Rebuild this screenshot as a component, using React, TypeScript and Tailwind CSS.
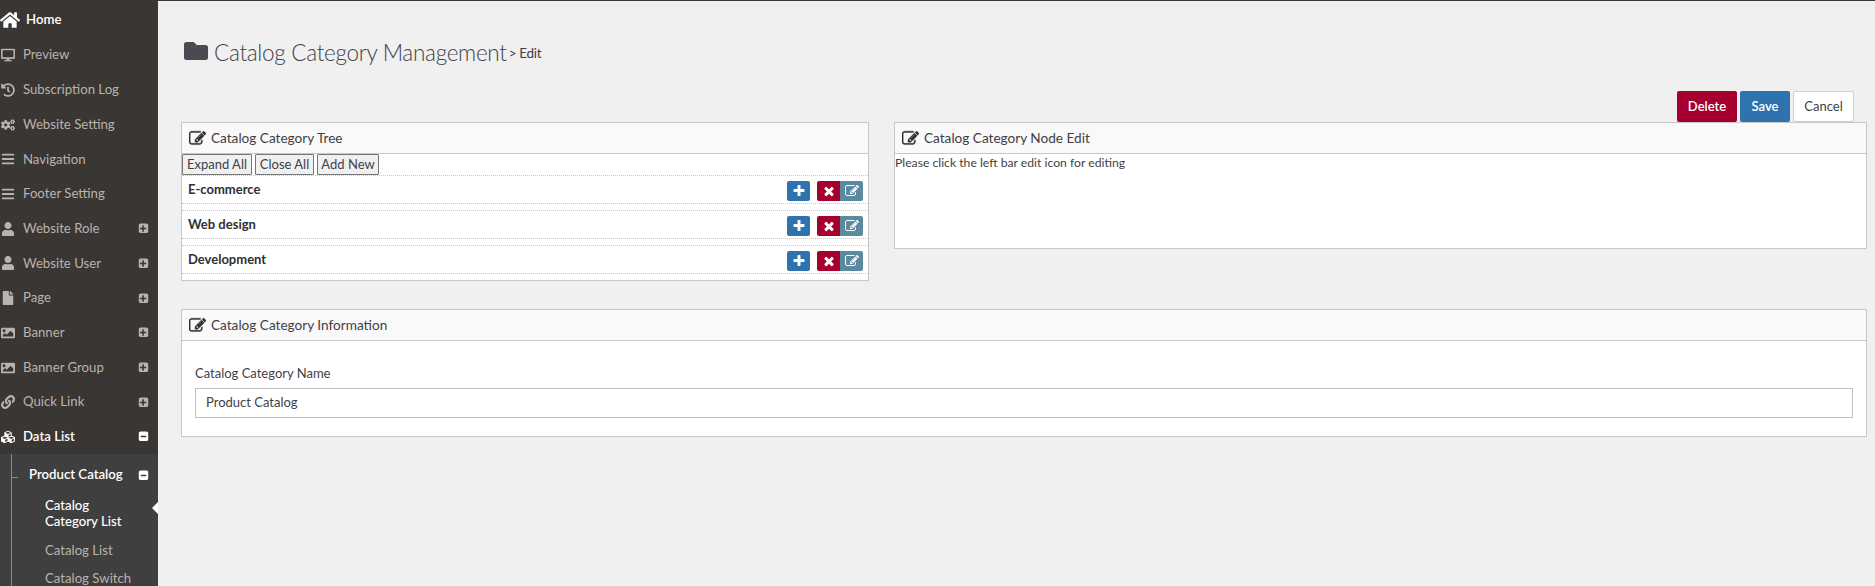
import { FaHome, FaDesktop, FaHistory, FaCogs, FaBars, FaUser, FaFile, FaImage, FaLink, FaCubes, FaFolder } from "react-icons/fa";

type IconProps = { className?: string };

function Glyph({ d, className }: IconProps & { d: string }) {
  return (
    <svg viewBox="0 0 1792 1792" fill="currentColor" className={className}>
      <path d={d} />
    </svg>
  );
}

const EditIcon = ({ className }: IconProps) => (
  <Glyph className={className} d="M888 1184l116-116-152-152-116 116v56h96v96h56zm440-720q-16-16-33 1l-350 350q-17 17-1 33t33-1l350-350q17-17 1-33zm80 594v190q0 119-84.500 203.500t-203.500 84.500h-832q-119 0-203.500-84.500t-84.500-203.500v-832q0-119 84.500-203.500t203.500-84.500h832q63 0 117 25 15 7 18 23 3 17-9 29l-49 49q-14 14-32 8-23-6-45-6h-832q-66 0-113 47t-47 113v832q0 66 47 113t113 47h832q66 0 113-47t47-113v-126q0-13 9-22l64-64q15-15 35-7t20 29zm-96-738l288 288-672 672h-288v-288zm444 132l-92 92-288-288 92-92q28-28 68-28t68 28l152 152q28 28 28 68t-28 68z" />
);
const TimesIcon = ({ className }: IconProps) => (
  <Glyph className={className} d="M1490 1322q0 40-28 68l-136 136q-28 28-68 28t-68-28l-294-294-294 294q-28 28-68 28t-68-28l-136-136q-28-28-28-68t28-68l294-294-294-294q-28-28-28-68t28-68l136-136q28-28 68-28t68 28l294 294 294-294q28-28 68-28t68 28l136 136q28 28 28 68t-28 68l-294 294 294 294q28 28 28 68z" />
);
const PlusIcon = ({ className }: IconProps) => (
  <Glyph className={className} d="M1600 736v192q0 40-28 68t-68 28h-416v416q0 40-28 68t-68 28h-192q-40 0-68-28t-28-68v-416h-416q-40 0-68-28t-28-68v-192q0-40 28-68t68-28h416v-416q0-40 28-68t68-28h192q40 0 68 28t28 68v416h416q40 0 68 28t28 68z" />
);
const PlusSquare = ({ className }: IconProps) => (
  <Glyph className={className} d="M1344 960v-128q0-26-19-45t-45-19h-320v-320q0-26-19-45t-45-19h-128q-26 0-45 19t-19 45v320h-320q-26 0-45 19t-19 45v128q0 26 19 45t45 19h320v320q0 26 19 45t45 19h128q26 0 45-19t19-45v-320h320q26 0 45-19t19-45zm320-576v960q0 119-84.500 203.500t-203.500 84.500h-960q-119 0-203.500-84.500t-84.500-203.500v-960q0-119 84.500-203.500t203.500-84.500h960q119 0 203.500 84.500t84.500 203.500z" />
);
const MinusSquare = ({ className }: IconProps) => (
  <Glyph className={className} d="M1344 960v-128q0-26-19-45t-45-19h-768q-26 0-45 19t-19 45v128q0 26 19 45t45 19h768q26 0 45-19t19-45zm320-576v960q0 119-84.500 203.500t-203.500 84.500h-960q-119 0-203.500-84.500t-84.500-203.500v-960q0-119 84.500-203.500t203.500-84.500h960q119 0 203.500 84.500t84.500 203.500z" />
);

const menu = [
  { name: "Preview", icon: FaDesktop },
  { name: "Subscription Log", icon: FaHistory },
  { name: "Website Setting", icon: FaCogs },
  { name: "Navigation", icon: FaBars },
  { name: "Footer Setting", icon: FaBars },
  { name: "Website Role", icon: FaUser, more: true },
  { name: "Website User", icon: FaUser, more: true },
  { name: "Page", icon: FaFile, more: true },
  { name: "Banner", icon: FaImage, more: true },
  { name: "Banner Group", icon: FaImage, more: true },
  { name: "Quick Link", icon: FaLink, more: true },
];

const categories = ["E-commerce", "Web design", "Development"];

function PanelHeader({ title }: { title: string }) {
  return (
    <div className="h-[31px] flex items-center gap-[5px] pl-[7px] bg-[#f9f9f9] border-b border-[#c8c8c8] text-[13.6px] text-[#3f3f46]">
      <EditIcon className="w-[17px] h-[17px] text-[#2c2c33] stroke-current stroke-[40]" />
      <span>{title}</span>
    </div>
  );
}

function Sidebar() {
  return (
    <aside className="w-[158px] h-full shrink-0 bg-[#3a3634] text-[#b9b3ae] text-[13.2px] pt-[2px] overflow-hidden">
      <div className="h-[35px] pb-px flex items-center gap-[6px] text-white font-semibold">
        <FaHome className="w-[20px] h-[18px]" />
        <span>Home</span>
      </div>
      {menu.map((item) => (
        <div key={item.name} className="h-[34.7px] flex items-center">
          <item.icon className="w-[14px] h-[14px] ml-px mr-[8px] shrink-0" />
          <span className="flex-1">{item.name}</span>
          {item.more && <PlusSquare className="w-[11px] h-[11px] mr-[9px]" />}
        </div>
      ))}
      <div className="h-[34px] flex items-center text-white font-semibold">
        <FaCubes className="w-[14px] h-[14px] ml-px mr-[8px] shrink-0" />
        <span className="flex-1">Data List</span>
        <MinusSquare className="w-[11px] h-[11px] mr-[9px] text-white" />
      </div>
      <div className="relative h-[140px] bg-[#403f3f]">
        <div className="absolute left-[11px] top-0 bottom-0 border-l border-[#8a8a8a]" />
        <div className="h-[43px] flex items-center pl-[29px] text-white font-semibold">
          <div className="absolute left-[11px] top-[23px] w-[7px] border-t border-[#8a8a8a]" />
          <span className="flex-1">Product Catalog</span>
          <MinusSquare className="w-[11px] h-[11px] mr-[9px] text-white" />
        </div>
        <div className="relative pl-[45px] pr-[24px] text-white leading-[16px] font-medium">
          Catalog Category List
          <div className="absolute right-0 top-[5px] border-y-[6px] border-r-[6px] border-y-transparent border-r-white" />
        </div>
        <div className="pl-[45px] pt-[13px] leading-[16px]">Catalog List</div>
        <div className="pl-[45px] pt-[12px] leading-[16px]">Catalog Switch</div>
      </div>
    </aside>
  );
}

export default function App() {
  return (
    <div className="h-[586px] overflow-hidden flex bg-[#f0f0f0] border-t border-[#3a3634] font-['Lato',sans-serif]">
      <Sidebar />
      <main className="flex-1 pl-[23px] pr-[8px] text-[#3f3f46]">
        {/* Title */}
        <div className="h-[90px] pt-[35px] pl-[3px] flex items-start">
          <FaFolder className="w-[24px] h-[24px] mt-[3px] text-[#4a4a52] mr-[6px]" />
          <span className="text-[22.5px] leading-[34px] font-light tracking-[-0.3px]">Catalog Category Management</span>
          <span className="text-[13.5px] leading-[34px] ml-[2px] tracking-[-0.3px]">&gt; Edit</span>
        </div>

        {/* Actions */}
        <div className="flex justify-end gap-[3px] pr-[13px] text-[13px] h-[31px]">
          <button className="w-[60px] rounded-[2px] bg-[#a6002e] text-white font-semibold">Delete</button>
          <button className="w-[50px] rounded-[2px] bg-[#2e72ae] text-white font-semibold">Save</button>
          <button className="w-[61px] rounded-[2px] bg-white border border-[#d0d0d0]">Cancel</button>
        </div>

        <div className="flex items-start gap-[25px]">
          {/* Tree */}
          <section className="w-[688px] h-[159px] bg-white border border-[#c8c8c8]">
            <PanelHeader title="Catalog Category Tree" />
            <div className="flex gap-[3px] text-[13px] h-[21px]">
              <button className="w-[70px] bg-[#f0f0f0] border border-[#767676] rounded-[1px]">Expand All</button>
              <button className="w-[59px] bg-[#f0f0f0] border border-[#767676] rounded-[1px]">Close All</button>
              <button className="w-[62px] bg-[#f0f0f0] border border-[#767676] rounded-[1px]">Add New</button>
            </div>
            <div className="flex flex-col gap-[6px]">
              {categories.map((c) => (
                <div key={c} className="h-[29px] flex items-center pl-[6px] pr-[5px] border-y border-dotted border-[#c8c8c8]">
                  <span className="flex-1 text-[13px] font-bold text-[#2f2f33]">{c}</span>
                  <button className="w-[23px] h-[20px] mt-[2px] flex items-center justify-center rounded-[2px] bg-[#2e72ae] text-white mr-[7px]">
                    <PlusIcon className="w-[14px] h-[14px]" />
                  </button>
                  <button className="w-[23px] h-[20px] mt-[2px] flex items-center justify-center rounded-l-[2px] bg-[#a6002e] text-white">
                    <TimesIcon className="w-[14px] h-[14px]" />
                  </button>
                  <button className="w-[23px] h-[20px] mt-[2px] flex items-center justify-center rounded-r-[2px] bg-[#5b8a9f] text-white">
                    <EditIcon className="w-[14px] h-[14px]" />
                  </button>
                </div>
              ))}
            </div>
          </section>

          {/* Node edit */}
          <section className="flex-1 h-[127px] bg-white border border-[#c8c8c8]">
            <PanelHeader title="Catalog Category Node Edit" />
            <p className="text-[12.2px] leading-[18px]">Please click the left bar edit icon for editing</p>
          </section>
        </div>

        {/* Information */}
        <section className="mt-[28px] h-[128px] bg-white border border-[#c8c8c8]">
          <PanelHeader title="Catalog Category Information" />
          <div className="px-[13px] pt-[23px]">
            <div className="text-[13px] leading-[18px] mb-[6px]">Catalog Category Name</div>
            <div className="h-[30px] flex items-center px-[10px] border border-[#c0c0c0] text-[13px]">Product Catalog</div>
          </div>
        </section>
      </main>
    </div>
  );
}
